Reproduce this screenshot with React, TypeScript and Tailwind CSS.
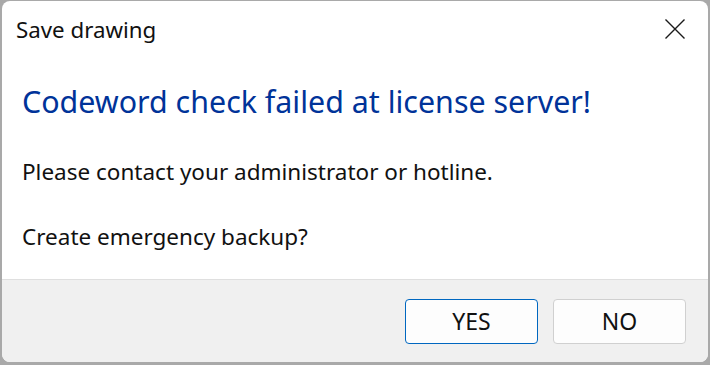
import React from "react";

export default function App() {
  const font = { fontFamily: '"Noto Sans", "Open Sans", sans-serif' };
  return (
    <div
      className="w-[710px] h-[365px] bg-[#a9a9a9] pt-[1px] pl-[2px] pr-[2px] pb-[3px]"
      style={font}
    >
      <div className="h-full w-full rounded-[8px] bg-white flex flex-col overflow-hidden">
        <div className="h-[58px] shrink-0 flex items-start justify-between pl-[14px] pr-[22px]">
          <div className="mt-[18px] text-[22.3px] leading-[22px] text-[#111]">Save drawing</div>
          <svg className="mt-[17px]" width="22" height="22" viewBox="0 0 22 22">
            <path d="M1.5 1.5 L20.5 20.5 M20.5 1.5 L1.5 20.5" stroke="#1a1a1a" strokeWidth="1.4" fill="none" />
          </svg>
        </div>
        <div className="flex-1 pl-[20px]">
          <div className="mt-[28px] text-[30.4px] leading-[30px] text-[#003399]">
            Codeword check failed at license server!
          </div>
          <div className="mt-[44px] text-[22.5px] leading-[22px] text-[#111]">
            Please contact your administrator or hotline.
          </div>
          <div className="mt-[43px] text-[22.5px] leading-[22px] text-[#111]">
            Create emergency backup?
          </div>
        </div>
        <div className="h-[83px] shrink-0 border-t border-[#dfdfdf] bg-[#f0f0f0] flex items-center justify-end gap-[15px] pr-[22px]">
          <button className="w-[133px] h-[45px] rounded-[4px] bg-[#fdfdfd] border border-[#0067c0] text-[23px] leading-[23px] text-[#111]">
            YES
          </button>
          <button className="w-[133px] h-[45px] rounded-[4px] bg-[#fdfdfd] border border-[#d0d0d0] text-[23px] leading-[23px] text-[#111]">
            NO
          </button>
        </div>
      </div>
    </div>
  );
}
